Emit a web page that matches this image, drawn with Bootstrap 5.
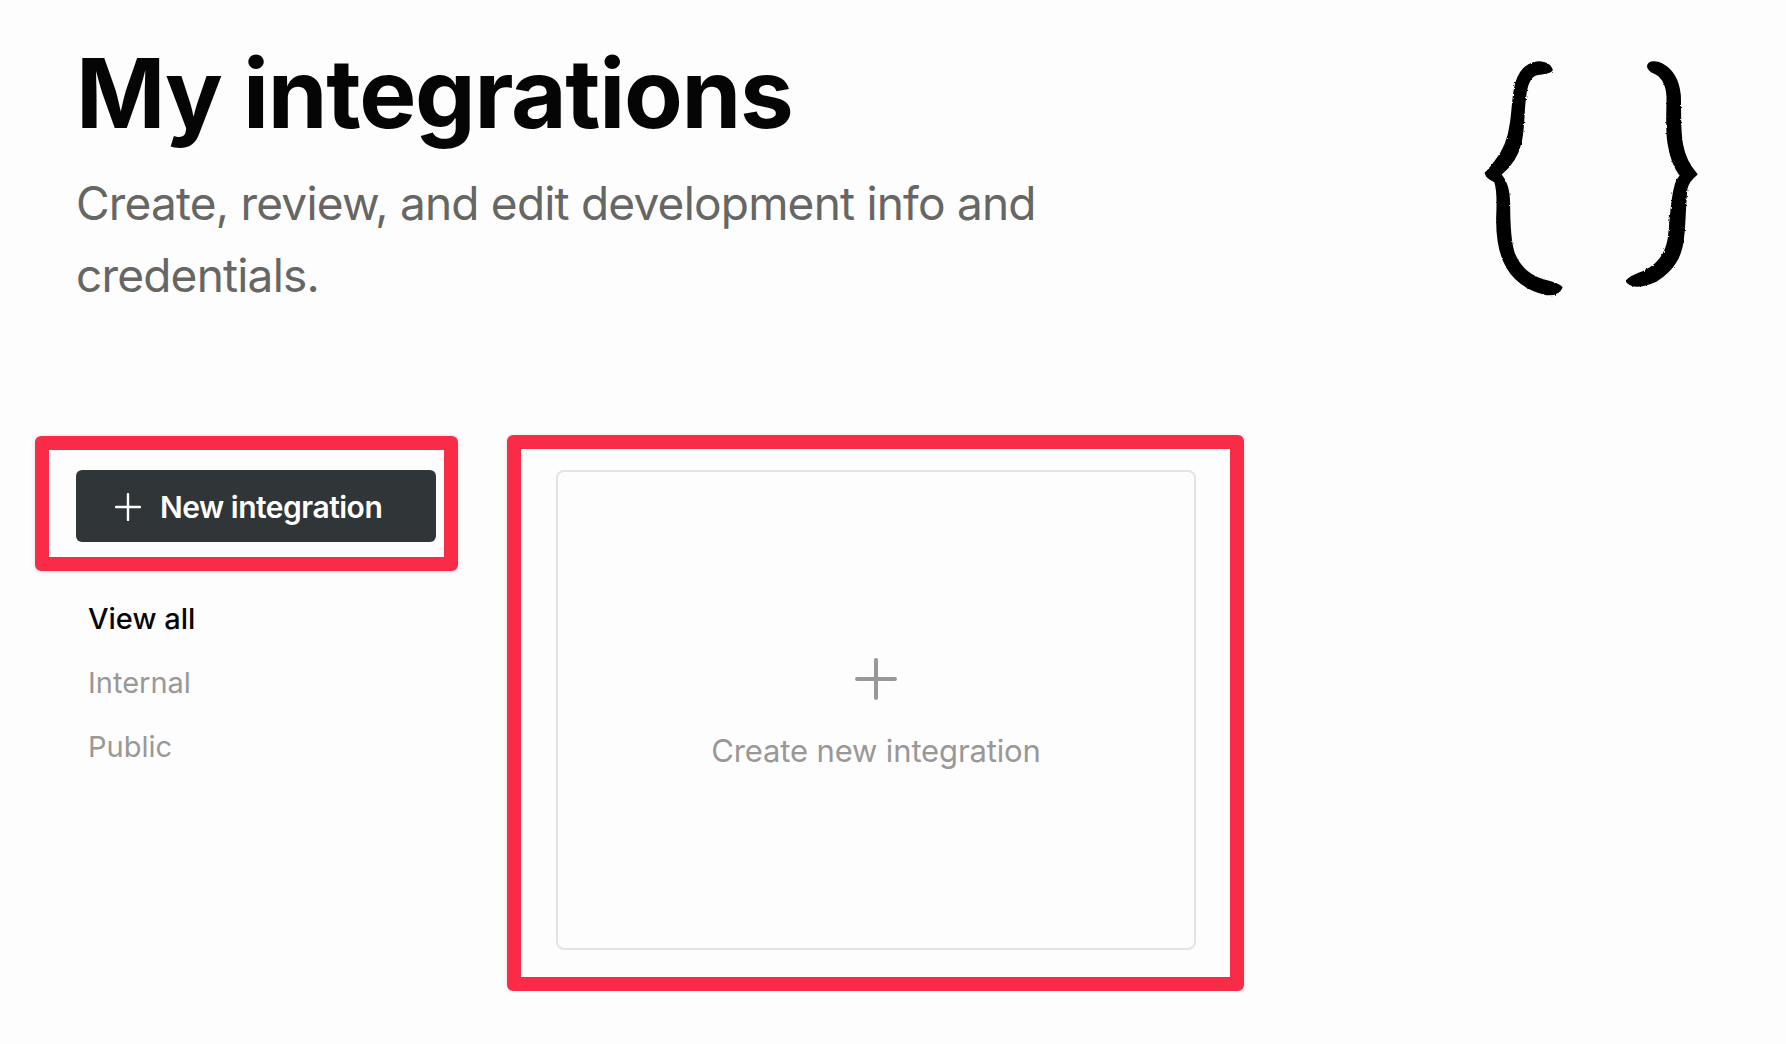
<!DOCTYPE html>
<html lang="en">

<head>
    <meta charset="UTF-8" />
    <title>My integrations</title>
    <link href="https://cdn.jsdelivr.net/npm/bootstrap@5.3.3/dist/css/bootstrap.min.css" rel="stylesheet">
    <style>
        body {
            background: #fefdfd;
            font-family: Inter, "Liberation Sans", sans-serif;
            overflow: hidden;
        }

        .page-head {
            padding: 36px 46px 0 76px;
            height: 435px;
        }

        .page-title {
            font-size: 96px;
            line-height: 115px;
            font-weight: 700;
            letter-spacing: -1.3px;
            color: #050505;
            margin: 0;
        }

        .page-sub {
            width: 1000px;
            font-size: 46px;
            line-height: 72px;
            letter-spacing: -0.8px;
            color: #666664;
            margin: 16px 0 0;
        }

        .braces {
            width: 300px;
            height: 280px;
            margin-top: 4px;
        }

        .page-body {
            padding-left: 35px;
        }

        .side-col {
            width: 423px;
            margin-right: 49px;
            padding-top: 1px;
        }

        .callout {
            border: 14px solid #f92c47;
            border-radius: 6px;
            box-shadow: 0 1px 5px rgba(0, 0, 0, .12);
        }

        .callout-btn {
            padding: 20px 8px 14px 27px;
            height: 135px;
        }

        .callout-card {
            width: 737px;
            height: 556px;
            padding: 21px 34px 27px 35px;
        }

        .new-btn {
            width: 360px;
            height: 72px;
            background: #303538;
            border: 0;
            border-radius: 6px;
            color: #fff;
            font-size: 30px;
            font-weight: 600;
            letter-spacing: -0.5px;
            gap: 19px;
            padding: 2px 0 0 39px;
        }

        .new-btn:hover {
            background: #303538;
            color: #fff;
        }

        .side-nav {
            padding: 16px 0 0 53px;
        }

        .side-link {
            font-size: 29px;
            line-height: 64px;
            color: #999896;
            padding: 0;
        }

        .side-link.active {
            color: #050505;
            font-weight: 500;
        }

        .create-box {
            height: 100%;
            border: 2px solid #e4e3e2;
            border-radius: 8px;
            color: #999896;
            font-size: 31px;
            letter-spacing: -0.14px;
            padding-top: 186px;
        }

        .create-box svg {
            margin-bottom: 28px;
        }
    </style>
</head>

<body>

    <header class="page-head d-flex justify-content-between align-items-start">
        <div>
            <h1 class="page-title">My integrations</h1>
            <p class="page-sub">Create, review, and edit development info and credentials.</p>
        </div>
        <!-- hand drawn curly braces -->
        <svg class="braces flex-shrink-0" viewBox="0 0 900 840" aria-hidden="true">
            <filter id="inkEdge" x="-5%" y="-5%" width="110%" height="110%">
                <feTurbulence type="fractalNoise" baseFrequency="0.12" numOctaves="2" seed="4" />
                <feDisplacementMap in="SourceGraphic" scale="7" />
            </filter>
            <g fill="#000" stroke="#000" stroke-width="5" stroke-linejoin="round" filter="url(#inkEdge)">
                <path d="M336 90C330 72 310 64 290 67C260 72 238 95 228 130C218 165 218 215 212 250C206 300 190 335 165 365C155 378 145 392 137 398C136 408 150 418 165 425C172 445 173 490 171 530C170 590 180 645 200 680C225 725 270 752 320 763C345 765 360 755 365 742C355 730 330 725 310 720C270 708 238 680 222 640C208 600 208 540 208 490C208 455 200 425 182 403C205 385 232 355 243 305C252 265 250 215 255 180C258 140 265 115 285 105C300 98 325 104 336 90Z" />
                <path d="M624 76C628 64 650 64 665 72C695 88 715 115 720 165C722 210 718 270 727 315C733 350 750 380 770 403C755 415 745 425 740 445C735 490 735 550 730 590C725 650 700 690 650 722C620 735 590 742 575 735C565 730 560 726 560 722C570 710 590 702 610 695C650 678 675 650 685 600C692 550 692 490 705 440C708 425 715 415 722 407C705 385 692 355 685 310C678 270 682 215 682 170C680 130 665 105 635 95C628 90 622 84 624 76Z" />
            </g>
        </svg>
    </header>

    <div class="page-body d-flex align-items-start">
        <aside class="side-col">
            <div class="callout callout-btn">
                <button type="button" class="btn new-btn d-flex align-items-center">
                    <svg width="26" height="28" viewBox="0 0 26 28" aria-hidden="true">
                        <path d="M13 1v26M1 14h24" stroke="#fff" stroke-width="2.4" stroke-linecap="round" />
                    </svg>
                    <span>New integration</span>
                </button>
            </div>
            <nav class="side-nav nav flex-column">
                <a class="side-link nav-link active" href="#">View all</a>
                <a class="side-link nav-link" href="#">Internal</a>
                <a class="side-link nav-link" href="#">Public</a>
            </nav>
        </aside>

        <section class="callout callout-card">
            <div class="create-box d-flex flex-column align-items-center">
                <svg width="42" height="42" viewBox="0 0 42 42" aria-hidden="true">
                    <path d="M21 2v38M2 21h38" stroke="#999896" stroke-width="4" stroke-linecap="round" />
                </svg>
                <span>Create new integration</span>
            </div>
        </section>
    </div>

    <script src="https://cdn.jsdelivr.net/npm/bootstrap@5.3.3/dist/js/bootstrap.bundle.min.js"></script>
</body>

</html>
